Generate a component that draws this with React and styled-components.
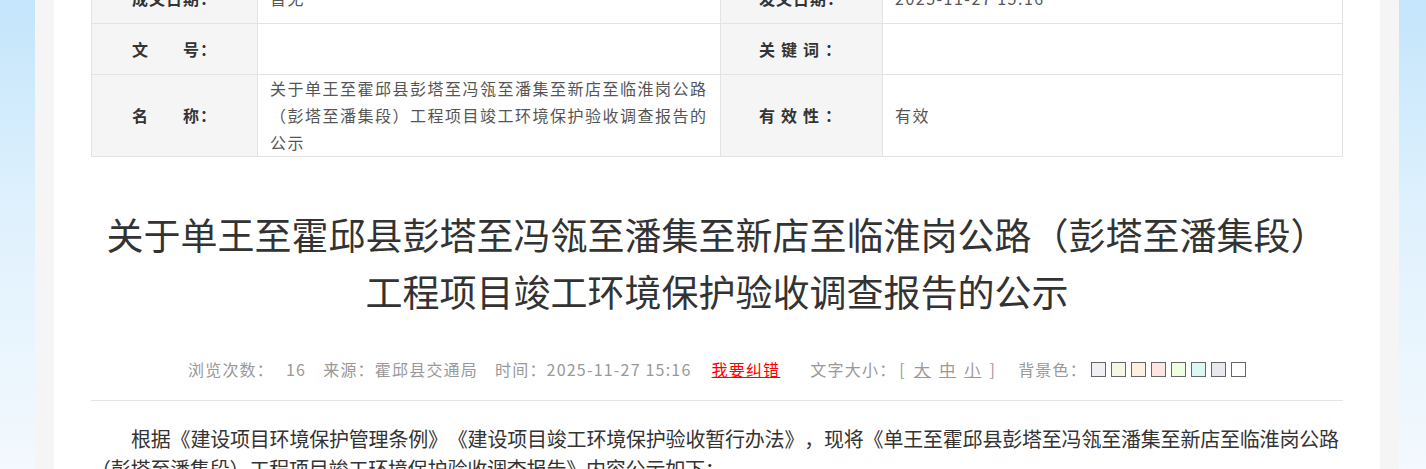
import React from "react";
import styled, { createGlobalStyle } from "styled-components";

const GlobalStyle = createGlobalStyle`
  html, body {
    margin: 0;
    padding: 0;
  }
  body {
    height: 469px;
    overflow: hidden;
    font-family: "Noto Sans CJK SC", "Noto Sans", sans-serif;
    text-spacing-trim: space-all;
    background: linear-gradient(to bottom, #c4e5fb 0%, #dff1fd 45%, #f3f9fe 100%);
  }
`;

// 정보 표 데이터
const rows = [
  { l1: "成文日期：", s1: 1, v1: "暂无", l2: "发文日期：", s2: 1, v2: "2025-11-27 15:16" },
  { l1: "文　　号：", s1: 1, v1: "", l2: "关键词：", s2: 6, v2: "" },
  {
    l1: "名　　称：",
    s1: 1,
    v1: "关于单王至霍邱县彭塔至冯瓴至潘集至新店至临淮岗公路（彭塔至潘集段）工程项目竣工环境保护验收调查报告的公示",
    l2: "有效性：",
    s2: 6,
    v2: "有效",
  },
];

const swatches = ["#eef0f4", "#f4f8e4", "#fdf0e0", "#fde6e1", "#effde0", "#dcf8f2", "#e8e8ef", "#ffffff"];

const App = () => {
  return (
    <>
      <GlobalStyle />
      <StPage>
        <StFrame>
          <StInner>
            <StInfoTable>
              <colgroup>
                <col style={{ width: 166 }} />
                <col style={{ width: 463 }} />
                <col style={{ width: 162 }} />
                <col style={{ width: 460 }} />
              </colgroup>
              <tbody>
                {rows.map((r, i) => (
                  <tr key={i}>
                    <StLabelCell $pad={40}>
                      <StLabel $ls={r.s1}>{r.l1}</StLabel>
                    </StLabelCell>
                    <StValueCell>{r.v1}</StValueCell>
                    <StLabelCell $pad={38}>
                      <StLabel $ls={r.s2}>{r.l2}</StLabel>
                    </StLabelCell>
                    <StValueCell>{r.v2}</StValueCell>
                  </tr>
                ))}
              </tbody>
            </StInfoTable>

            <StTitle>
              关于单王至霍邱县彭塔至冯瓴至潘集至新店至临淮岗公路（彭塔至潘集段）
              <br />
              工程项目竣工环境保护验收调查报告的公示
            </StTitle>

            <StMeta>
              <StMetaItem>
                浏览次数：<StNum>16</StNum>
              </StMetaItem>
              <StMetaItem>来源：霍邱县交通局</StMetaItem>
              <StMetaItem>时间：2025-11-27 15:16</StMetaItem>
              <StErrLink href="#">我要纠错</StErrLink>
              <StMetaItem $gap={30}>
                文字大小：
                <StSizeGroup>
                  <span>[</span>
                  <StSizeLink href="#">大</StSizeLink>
                  <StSizeLink href="#">中</StSizeLink>
                  <StSizeLink href="#">小</StSizeLink>
                  <span>]</span>
                </StSizeGroup>
              </StMetaItem>
              <StMetaItem $gap={22}>
                背景色：
                <StSwatches>
                  {swatches.map((c) => (
                    <StSwatch key={c} $color={c} />
                  ))}
                </StSwatches>
              </StMetaItem>
            </StMeta>

            <StBody>
              根据《建设项目环境保护管理条例》《建设项目竣工环境保护验收暂行办法》，现将《单王至霍邱县彭塔至冯瓴至潘集至新店至临淮岗公路（彭塔至潘集段）工程项目竣工环境保护验收调查报告》内容公示如下：
            </StBody>
          </StInner>
        </StFrame>
      </StPage>
    </>
  );
};

export default App;

const StPage = styled.div`
  width: 1364px;
  margin-left: 35px;
  /* 스크롤된 위치 */
  margin-top: -28px;
`;

const StFrame = styled.div`
  background-color: #f5f5f5;
  padding: 0 19px;
`;

const StInner = styled.div`
  background-color: #fff;
  padding: 0 37px;
  height: 540px;
`;

const StInfoTable = styled.table`
  width: 1251px;
  border-collapse: collapse;
  table-layout: fixed;

  td {
    border: 1px solid #e3e3e3;
    height: 50px;
    font-size: 16px;
    line-height: 27px;
  }
`;

const StLabelCell = styled.td`
  background-color: #f5f5f5;
  padding: 0 0 0 ${(p) => p.$pad}px;
  color: #333;
  font-weight: bold;
`;

const StLabel = styled.span`
  letter-spacing: ${(p) => p.$ls}px;
  white-space: nowrap;
`;

const StValueCell = styled.td`
  padding: 0 12px;
  color: #555;
  letter-spacing: 1.5px;
  vertical-align: middle;
`;

const StTitle = styled.h1`
  margin: 49px 0 0;
  font-size: 37px;
  font-weight: normal;
  line-height: 57px;
  color: #333;
  text-align: center;
  white-space: nowrap;
`;

const StMeta = styled.div`
  display: flex;
  justify-content: center;
  align-items: center;
  margin-top: 34px;
  height: 30px;
  padding-bottom: 16px;
  border-bottom: 1px solid #e5e5e5;

  font-size: 16px;
  letter-spacing: 1.2px;
  color: #999;
`;

const StMetaItem = styled.span`
  display: inline-flex;
  align-items: center;
  margin-left: ${(p) => p.$gap ?? 17}px;

  &:first-child {
    margin-left: 0;
  }
`;

const StNum = styled.span`
  margin-left: 12px;
`;

const StErrLink = styled.a`
  margin-left: 20px;
  color: #f00;
  text-decoration: underline;
`;

const StSizeGroup = styled.span`
  display: inline-flex;
  gap: 8px;
  margin-left: 3px;
`;

const StSizeLink = styled.a`
  color: #999;
  text-decoration: underline;
`;

const StSwatches = styled.span`
  display: inline-flex;
  gap: 5px;
  margin-left: 4px;
`;

const StSwatch = styled.span`
  width: 13px;
  height: 13px;
  border: 1px solid #666;
  background-color: ${(p) => p.$color};
  cursor: pointer;
`;

const StBody = styled.p`
  margin: 23px 0 0;
  font-size: 20px;
  letter-spacing: -0.2px;
  line-height: 30px;
  text-indent: 40px;
  color: #333;
`;
